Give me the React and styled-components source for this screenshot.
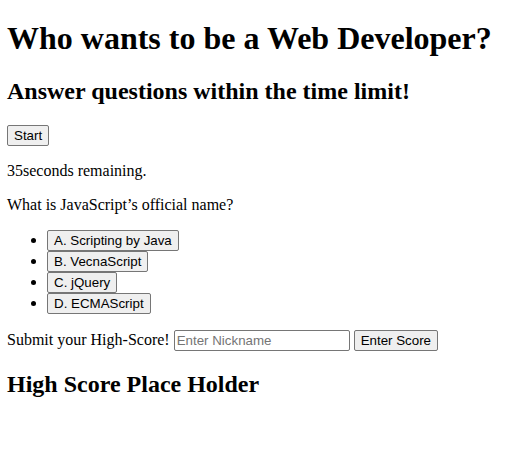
import React from "react"
import styled, { createGlobalStyle } from "styled-components"

const GlobalStyle = createGlobalStyle`
  body {
    margin: 0;
    font-family: "Liberation Serif", "Times New Roman", serif;
    font-size: 16px;
    color: #000;
    background: #fff;
  }
`

const Page = styled.div`
  display: flow-root;
  padding: 0 7px;
`

const Title = styled.h1`
  font-size: 32px;
  font-weight: bold;
  margin: 19.5px 0 21.44px;
`

const Subtitle = styled.h2`
  font-size: 24px;
  font-weight: bold;
  margin: 19.92px 0;
`

const Paragraph = styled.p`
  margin: 16px 0;
`

const Button = styled.button`
  font-family: "Liberation Sans", Arial, sans-serif;
  font-size: 13.333px;
  color: #000;
  background-color: #efefef;
  border: 1px solid #767676;
  border-radius: 2px;
  padding: 2px 6px;
  cursor: pointer;
`

const ChoiceList = styled.ul`
  margin: 16px 0;
  padding-left: 40px;
  list-style: disc;
`

const Choice = styled.li`
  line-height: normal;
`

const NicknameInput = styled.input`
  font-family: "Liberation Sans", Arial, sans-serif;
  font-size: 13.333px;
  width: 170px;
  padding: 2px 2px;
  border: 1px solid #767676;
  border-radius: 2px;
  &::placeholder {
    color: #757575;
  }
`

const ScoreHeading = styled.h2`
  font-size: 24px;
  font-weight: bold;
  margin: 19.92px 0;
`

const choices = [
  "A. Scripting by Java",
  "B. VecnaScript",
  "C. jQuery",
  "D. ECMAScript",
]

export default function App() {
  return (
    <Page>
      <GlobalStyle />
      <Title>Who wants to be a Web Developer?</Title>
      <Subtitle>Answer questions within the time limit!</Subtitle>
      <Paragraph>
        <Button>Start</Button>
      </Paragraph>
      <Paragraph>
        <span>35</span>seconds remaining.
      </Paragraph>
      <Paragraph>What is JavaScript’s official name?</Paragraph>
      <ChoiceList>
        {choices.map((c) => (
          <Choice key={c}>
            <Button>{c}</Button>
          </Choice>
        ))}
      </ChoiceList>
      <Paragraph>
        Submit your High-Score! <NicknameInput placeholder="Enter Nickname" />{" "}
        <Button>Enter Score</Button>
      </Paragraph>
      <ScoreHeading>High Score Place Holder</ScoreHeading>
    </Page>
  )
}
